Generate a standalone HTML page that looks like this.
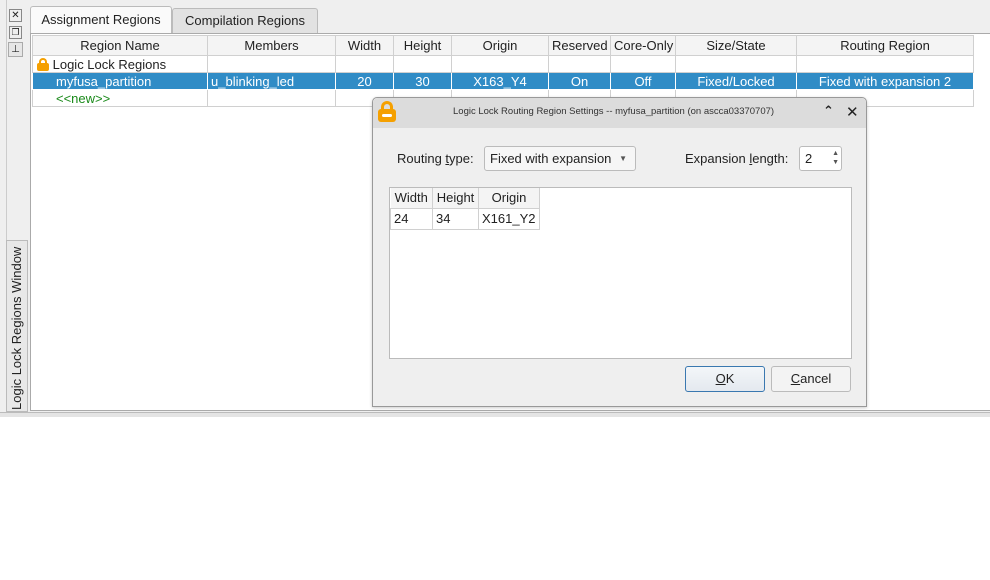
<!DOCTYPE html>
<html><head><style>
*{box-sizing:border-box;margin:0;padding:0}
body{width:990px;height:580px;background:#fff;font-family:"Liberation Sans","DejaVu Sans",sans-serif;font-size:13px;color:#222;position:relative;overflow:hidden}
.abs{position:absolute}
table{border-collapse:collapse;table-layout:fixed}
td,th{font-weight:normal;border:1px solid #d0d0d0;white-space:nowrap;overflow:hidden;height:17px;padding:0 3px}
th{height:20px;background:#f4f4f4;text-align:center}
.sel td{background:#308cc6;color:#fff;border-color:#fff}
.c{text-align:center}
</style></head><body>
<div class="abs" style="left:0;top:0;width:990px;height:417px;background:#efefef"></div>
<div class="abs" style="left:0;top:412px;width:990px;height:5px;background:#e4e4e4;border-top:1px solid #bbb"></div>
<!-- left strip -->
<div class="abs" style="left:6px;top:0;width:22px;height:412px;border-left:1px solid #ccc"></div>
<div class="abs" style="left:9px;top:9px;width:13px;height:13px;border:1px solid #888;font-size:10px;line-height:11px;text-align:center">✕</div>
<div class="abs" style="left:9px;top:26px;width:13px;height:13px;border:1px solid #888;font-size:9px;line-height:11px;text-align:center">❐</div>
<div class="abs" style="left:8px;top:42px;width:15px;height:15px;border:1px solid #aaa;background:#e6e6e6;font-size:10px;line-height:13px;text-align:center">⊥</div>
<div class="abs" style="left:6px;top:240px;width:22px;height:172px;border:1px solid #bbb;background:#e8e8e8"></div>
<div class="abs" style="left:8px;top:410px;transform:rotate(-90deg);transform-origin:0 0;width:170px;height:18px;font-size:13px;line-height:18px">Logic Lock Regions Window</div>
<!-- tabs -->
<div class="abs" style="left:30px;top:6px;width:142px;height:29px;background:#fafafa;border:1px solid #bbb;border-bottom:none;border-radius:3px 3px 0 0;text-align:center;line-height:26px">Assignment Regions</div>
<div class="abs" style="left:172px;top:8px;width:146px;height:25px;background:#e2e2e2;border:1px solid #bbb;border-bottom:none;border-radius:3px 3px 0 0;text-align:center;line-height:24px">Compilation Regions</div>
<div class="abs" style="left:30px;top:33px;width:960px;height:378px;background:#fff;border:1px solid #aaa;border-right:none"></div>
<table class="abs" style="left:32px;top:35px;width:941px">
<colgroup><col style="width:175px"><col style="width:128px"><col style="width:58px"><col style="width:58px"><col style="width:97px"><col style="width:62px"><col style="width:65px"><col style="width:121px"><col style="width:177px"></colgroup>
<tr><th>Region Name</th><th>Members</th><th>Width</th><th>Height</th><th>Origin</th><th>Reserved</th><th>Core-Only</th><th>Size/State</th><th>Routing Region</th></tr>
<tr><td style="padding-left:4px"><span style="display:inline-block;width:12px;height:13px;vertical-align:-2px;position:relative"><span style="position:absolute;left:2px;top:0;width:8px;height:8px;border:2px solid #f5a000;border-bottom:none;border-radius:4px 4px 0 0"></span><span style="position:absolute;left:0;top:5px;width:12px;height:8px;background:#f5a000;border-radius:2px"></span></span> Logic Lock Regions</td><td></td><td></td><td></td><td></td><td></td><td></td><td></td><td></td></tr>
<tr class="sel"><td style="padding-left:23px">myfusa_partition</td><td>u_blinking_led</td><td class="c">20</td><td class="c">30</td><td class="c">X163_Y4</td><td class="c">On</td><td class="c">Off</td><td class="c">Fixed/Locked</td><td class="c">Fixed with expansion 2</td></tr>
<tr><td style="padding-left:23px;color:#1a8a1a">&lt;&lt;new&gt;&gt;</td><td></td><td></td><td></td><td></td><td></td><td></td><td></td><td></td></tr>
</table>
<!-- dialog -->
<div class="abs" style="left:372px;top:97px;width:495px;height:310px;background:#efefef;border:1px solid #999;border-radius:5px 5px 0 0;box-shadow:0 1px 3px rgba(0,0,0,.2)">
<div style="height:30px;background:#dcdcdc;border-radius:5px 5px 0 0;position:relative">
<span style="position:absolute;left:5px;top:3px;width:18px;height:22px"><span style="position:absolute;left:3px;top:0;width:12px;height:12px;border:3px solid #f5a000;border-bottom:none;border-radius:6px 6px 0 0"></span><span style="position:absolute;left:0;top:8px;width:18px;height:13px;background:#f5a000;border-radius:3px"></span><span style="position:absolute;left:4px;top:13px;width:10px;height:3px;background:#fff;border-radius:2px"></span></span>
<div style="position:absolute;left:80px;top:8px;font-size:9.5px;color:#333">Logic Lock Routing Region Settings -- myfusa_partition (on ascca03370707)</div>
<div style="position:absolute;left:450px;top:5px;font-size:13px;font-weight:bold">⌃</div>
<div style="position:absolute;left:473px;top:5px;font-size:15px;font-weight:bold">✕</div>
</div>
<div class="abs" style="left:24px;top:53px">Routing <u>t</u>ype:</div>
<div class="abs" style="left:111px;top:48px;width:152px;height:25px;border:1px solid #bbb;border-radius:3px;background:#f6f6f6;padding-left:5px;line-height:23px">Fixed with expansion<span style="position:absolute;right:8px;top:0;font-size:8px;color:#555">▼</span></div>
<div class="abs" style="left:312px;top:53px">Expansion <u>l</u>ength:</div>
<div class="abs" style="left:426px;top:48px;width:43px;height:25px;border:1px solid #bbb;border-radius:3px;background:#fff;padding-left:5px;line-height:23px">2<span style="position:absolute;right:2px;top:2px;font-size:7px;line-height:9px;color:#555">▲<br>▼</span></div>
<div class="abs" style="left:16px;top:89px;width:463px;height:172px;background:#fff;border:1px solid #bbb">
<table style="width:149px"><colgroup><col style="width:42px"><col style="width:46px"><col style="width:61px"></colgroup>
<tr><th style="border-top:none;border-left:none">Width</th><th style="border-top:none">Height</th><th style="border-top:none">Origin</th></tr>
<tr><td style="height:21px">24</td><td>34</td><td>X161_Y2</td></tr></table>
</div>
<div class="abs" style="left:312px;top:268px;width:80px;height:26px;border:1px solid #3a78b0;border-radius:3px;background:linear-gradient(#f3f6f9,#e4e9ef);text-align:center;line-height:24px"><u>O</u>K</div>
<div class="abs" style="left:398px;top:268px;width:80px;height:26px;border:1px solid #bbb;border-radius:3px;background:#f3f3f3;text-align:center;line-height:24px"><u>C</u>ancel</div>
</div>
</body></html>
